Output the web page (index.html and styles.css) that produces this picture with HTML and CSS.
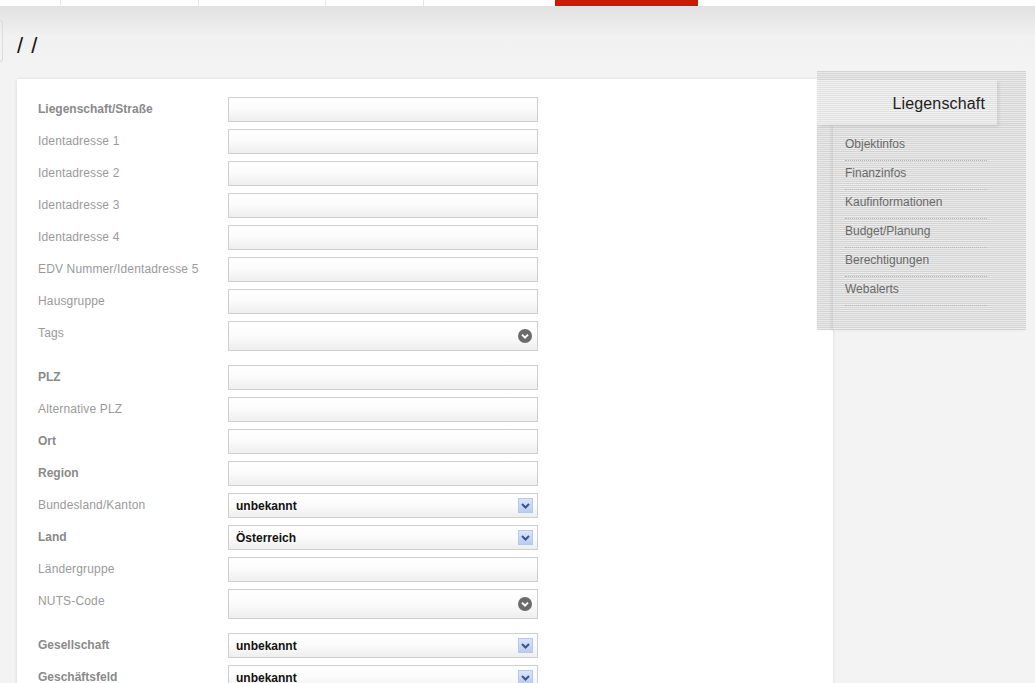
FILE: index.html
```html
<!DOCTYPE html>
<html lang="de">
<head>
<meta charset="utf-8">
<title>Liegenschaft</title>
<link rel="stylesheet" href="styles.css">
</head>
<body>
<div class="topbar">
  <div class="tab t1"></div>
  <div class="tab t2"></div>
  <div class="tab t3"></div>
  <div class="tab t4"></div>
  <div class="tab t5"></div>
  <div class="tab active"></div>
  <div class="tab rest"></div>
</div>
<div class="header">
  <div class="edge"></div>
  <h1 class="crumb">/ /</h1>
</div>
<div class="content">
  <div class="main">
    <form class="form">
      <div class="row"><label class="lbl strong">Liegenschaft/Straße</label><div class="field"></div></div>
      <div class="row"><label class="lbl">Identadresse 1</label><div class="field"></div></div>
      <div class="row"><label class="lbl">Identadresse 2</label><div class="field"></div></div>
      <div class="row"><label class="lbl">Identadresse 3</label><div class="field"></div></div>
      <div class="row"><label class="lbl">Identadresse 4</label><div class="field"></div></div>
      <div class="row"><label class="lbl">EDV Nummer/Identadresse 5</label><div class="field"></div></div>
      <div class="row"><label class="lbl">Hausgruppe</label><div class="field"></div></div>
      <div class="row gap"><label class="lbl">Tags</label><div class="field tall"><span class="round"><svg width="14" height="14" viewBox="0 0 14 14"><circle cx="7" cy="7" r="7" fill="#6b6b6b"/><path d="M4 5.6 L7 8.6 L10 5.6" fill="none" stroke="#fff" stroke-width="2"/></svg></span></div></div>
      <div class="row"><label class="lbl strong">PLZ</label><div class="field"></div></div>
      <div class="row"><label class="lbl">Alternative PLZ</label><div class="field"></div></div>
      <div class="row"><label class="lbl strong">Ort</label><div class="field"></div></div>
      <div class="row"><label class="lbl strong">Region</label><div class="field"></div></div>
      <div class="row"><label class="lbl">Bundesland/Kanton</label><div class="field select"><span class="val">unbekannt</span><span class="arrow"><svg width="9" height="6" viewBox="0 0 9 6"><path d="M1 1 L4.5 4.5 L8 1" fill="none" stroke="#3c5486" stroke-width="2"/></svg></span></div></div>
      <div class="row"><label class="lbl strong">Land</label><div class="field select"><span class="val">Österreich</span><span class="arrow"><svg width="9" height="6" viewBox="0 0 9 6"><path d="M1 1 L4.5 4.5 L8 1" fill="none" stroke="#3c5486" stroke-width="2"/></svg></span></div></div>
      <div class="row"><label class="lbl">Ländergruppe</label><div class="field"></div></div>
      <div class="row gap"><label class="lbl">NUTS-Code</label><div class="field tall"><span class="round"><svg width="14" height="14" viewBox="0 0 14 14"><circle cx="7" cy="7" r="7" fill="#6b6b6b"/><path d="M4 5.6 L7 8.6 L10 5.6" fill="none" stroke="#fff" stroke-width="2"/></svg></span></div></div>
      <div class="row"><label class="lbl strong">Gesellschaft</label><div class="field select"><span class="val">unbekannt</span><span class="arrow"><svg width="9" height="6" viewBox="0 0 9 6"><path d="M1 1 L4.5 4.5 L8 1" fill="none" stroke="#3c5486" stroke-width="2"/></svg></span></div></div>
      <div class="row"><label class="lbl strong">Geschäftsfeld</label><div class="field select"><span class="val">unbekannt</span><span class="arrow"><svg width="9" height="6" viewBox="0 0 9 6"><path d="M1 1 L4.5 4.5 L8 1" fill="none" stroke="#3c5486" stroke-width="2"/></svg></span></div></div>
    </form>
  </div>
  <aside class="side">
    <div class="side-head">Liegenschaft</div>
    <ul class="menu">
      <li>Objektinfos</li>
      <li>Finanzinfos</li>
      <li>Kaufinformationen</li>
      <li>Budget/Planung</li>
      <li>Berechtigungen</li>
      <li>Webalerts</li>
    </ul>
  </aside>
</div>
</body>
</html>
```
FILE: styles.css
```css
html, body {
  margin: 0;
  padding: 0;
  height: 100%;
  overflow: hidden;
}
body {
  background: #f3f3f3;
  font-family: "Liberation Sans", Arial, sans-serif;
  font-size: 12px;
}
.topbar {
  display: flex;
  height: 6px;
  background: #fff;
}
.tab {
  height: 6px;
  border-right: 1px solid #e6e6e6;
  box-sizing: border-box;
}
.t1 { width: 61px; }
.t2 { width: 138px; }
.t3 { width: 127px; }
.t4 { width: 98px; }
.t5 { width: 131px; border-right: none; }
.tab.active { width: 143px; background: #c81c00; border-right: none; }
.tab.rest { flex: 1; border-right: none; }
.header {
  height: 73px;
  display: flex;
  align-items: center;
  background: linear-gradient(#e1e1e1 0, #f1f1f1 30px, #f3f3f3 60px);
}
.edge {
  width: 2px;
  height: 40px;
  border: 1px solid #dcdcdc;
  border-left: none;
  border-radius: 0 4px 4px 0;
  margin-top: -4px;
  margin-right: 14px;
}
.crumb {
  margin: 6px 0 0 0;
  font-weight: normal;
  font-size: 22px;
  color: #111;
  font-family: "Liberation Sans", Arial, sans-serif;
  letter-spacing: 1px;
}
.content {
  display: flex;
  align-items: flex-start;
}
.main {
  margin-left: 17px;
  width: 816px;
  height: 620px;
  background: #fff;
  box-shadow: 0 0 3px rgba(0,0,0,0.12);
}
.form {
  padding: 18px 0 0 21px;
}
.row {
  display: flex;
  align-items: flex-start;
  margin-bottom: 7px;
}
.row.gap { margin-bottom: 14px; }
.lbl {
  width: 190px;
  padding-top: 5px;
  line-height: 14px;
  color: #9a9a9a;
  letter-spacing: 0.15px;
}
.lbl.strong {
  font-weight: bold;
  color: #8a8a8a;
  letter-spacing: 0;
}
.field {
  width: 310px;
  height: 25px;
  box-sizing: border-box;
  border: 1px solid #cfcfcf;
  background: linear-gradient(#ffffff 0, #fbfbfb 50%, #eeeeee 100%);
  display: flex;
  align-items: center;
}
.field.tall {
  height: 30px;
  justify-content: flex-end;
  padding-right: 5px;
}
.round { display: flex; }
.select {
  justify-content: space-between;
  padding: 0 4px 0 7px;
}
.val {
  font-weight: bold;
  color: #111;
  font-size: 12px;
}
.arrow {
  width: 15px;
  height: 15px;
  box-sizing: border-box;
  border: 1px solid #b7c8ec;
  background: linear-gradient(#dbe5fa, #b9cbf2);
  display: flex;
  align-items: center;
  justify-content: center;
}
.side {
  position: relative;
  z-index: 2;
  margin-left: -16px;
  margin-top: -8px;
  width: 209px;
  height: 259px;
  box-sizing: border-box;
  padding-top: 9px;
  background: repeating-linear-gradient(#d3d3d3 0, #d3d3d3 1px, #ececec 1px, #ececec 2px);
}
.side-head {
  width: 180px;
  height: 45px;
  box-sizing: border-box;
  padding: 15px 12px 0 0;
  text-align: right;
  font-size: 16px;
  letter-spacing: 0.15px;
  color: #222;
  background: rgba(255,255,255,0.3);
  box-shadow: 2px 2px 3px rgba(0,0,0,0.08);
  position: relative;
  z-index: 1;
}
.menu {
  list-style: none;
  margin: 0 0 0 16px;
  padding: 7px 0 0 12px;
  height: 205px;
  box-sizing: border-box;
  box-shadow: -2px 0 3px rgba(0,0,0,0.07);
}
.menu li {
  width: 142px;
  padding: 5px 0 9px;
  line-height: 14px;
  color: #6a6a6a;
  border-bottom: 1px dotted #b8b8b8;
}
```
